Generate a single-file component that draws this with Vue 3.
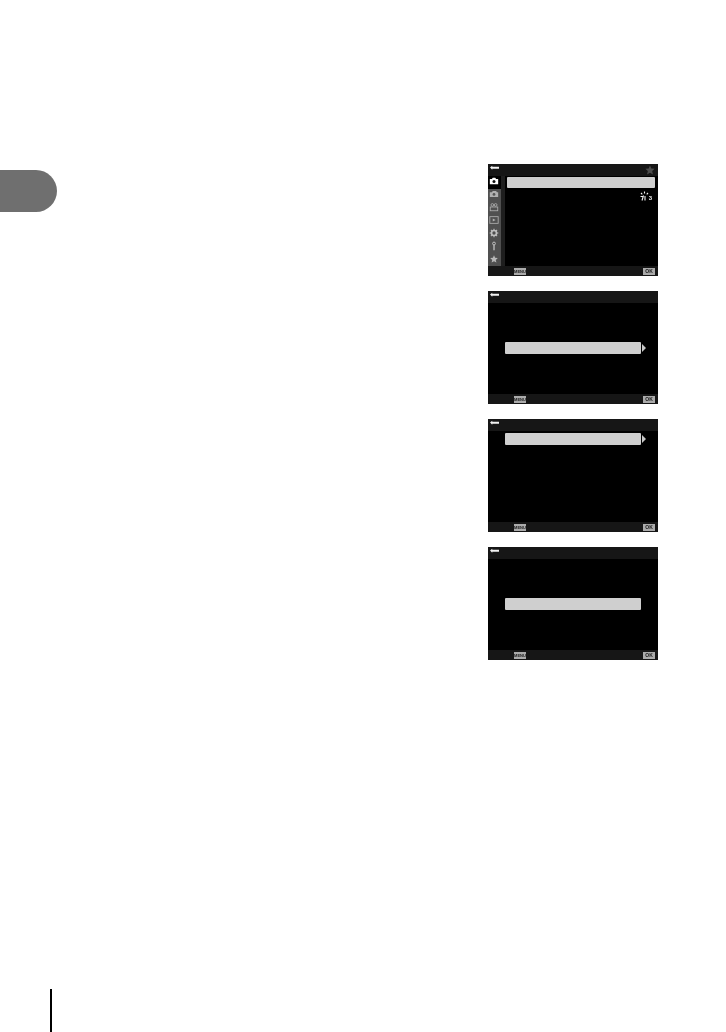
<script setup>
const screens = [
  { key: 'b', bodyClass: 'pad-mid', arrow: true },
  { key: 'c', bodyClass: 'pad-top', arrow: true },
  { key: 'd', bodyClass: 'pad-low', arrow: false },
]
</script>

<template>
  <div class="page">
    <div class="columns">
      <div class="tab"></div>
      <div class="shots">
        <div class="screen first">
          <div class="head">
            <svg class="back" viewBox="0 0 10 6"><path d="M0 2.500 2.500 .5v1.200H10v2H2.500v1.300z" fill="#f2f2f2"/></svg>
            <svg class="fav" viewBox="0 0 12 12"><path d="M6 .5l1.600 3.700 4 .4-3 2.700.9 4L6 9.200 2.500 11.300l.9-4-3-2.700 4-.4z" fill="#4c4c4c"/></svg>
          </div>
          <div class="middle">
            <div class="rail">
              <div class="rail-item on">
                <svg viewBox="0 0 12 12"><path d="M1 3.500h2.500L4.500 2h3l1 1.500H11V10H1z" fill="#fff"/><circle cx="6" cy="6.500" r="1.800" fill="#111"/></svg>
              </div>
              <div class="rail-item">
                <svg viewBox="0 0 12 12"><path d="M1 4h2.500L4.500 2.500h4L9.500 4H11v5.500H1z" fill="#b0b0b0"/><circle cx="6" cy="6.500" r="1.700" fill="#555"/></svg>
              </div>
              <div class="rail-item">
                <svg viewBox="0 0 12 12"><circle cx="4" cy="3.500" r="1.600" fill="none" stroke="#b0b0b0"/><circle cx="8" cy="3.500" r="1.600" fill="none" stroke="#b0b0b0"/><rect x="1.500" y="6" width="9" height="4.500" fill="none" stroke="#b0b0b0"/></svg>
              </div>
              <div class="rail-item">
                <svg viewBox="0 0 12 12"><rect x="1" y="2" width="10" height="8" fill="none" stroke="#b0b0b0"/><path d="M4.500 4.200 8 6 4.500 7.800z" fill="#b0b0b0"/></svg>
              </div>
              <div class="rail-item">
                <svg viewBox="0 0 12 12"><circle cx="6" cy="6" r="3" fill="none" stroke="#c0c0c0" stroke-width="2"/><path d="M6 .8v2M6 9.200v2M.8 6h2M9.200 6h2M2.300 2.300l1.400 1.400M8.300 8.300l1.400 1.400M2.300 9.700l1.400-1.400M8.300 3.700l1.400-1.400" stroke="#c0c0c0" stroke-width="1.300"/></svg>
              </div>
              <div class="rail-item">
                <svg viewBox="0 0 12 12"><circle cx="6" cy="3" r="1.700" fill="none" stroke="#c0c0c0" stroke-width="1.200"/><path d="M6 4.700V11" stroke="#c0c0c0" stroke-width="1.600"/></svg>
              </div>
              <div class="rail-item">
                <svg viewBox="0 0 12 12"><path d="M6 1.500l1.300 3.100 3.300.3-2.500 2.200.8 3.200L6 8.600 3.100 10.300l.8-3.200L1.400 4.900l3.300-.3z" fill="#b8b8b8"/></svg>
              </div>
            </div>
            <div class="rail-edge"></div>
            <div class="list">
              <div class="bar wide"></div>
              <div class="value">
                <svg viewBox="0 0 9 10"><path d="M4.500 .5v2M1 2l1.300 1.300M8 2 6.700 3.300M.5 5.500h2.500M3.500 4.500l-1.500 5M5 5v4.500" stroke="#f0f0f0" stroke-width="1.100" fill="none"/></svg>
                <span>3</span>
              </div>
            </div>
          </div>
          <div class="foot">
            <span class="key menu">MENU</span>
            <span class="key ok">OK</span>
          </div>
        </div>

        <div v-for="s in screens" :key="s.key" class="screen">
          <div class="head">
            <svg class="back" viewBox="0 0 10 6"><path d="M0 2.500 2.500 .5v1.200H10v2H2.500v1.300z" fill="#f2f2f2"/></svg>
          </div>
          <div class="body" :class="s.bodyClass">
            <div class="line">
              <div class="bar"></div>
              <svg v-if="s.arrow" class="more" viewBox="0 0 4 8"><path d="M0 0l4 4-4 4z" fill="#c8c8c8"/></svg>
            </div>
          </div>
          <div class="foot">
            <span class="key menu">MENU</span>
            <span class="key ok">OK</span>
          </div>
        </div>
      </div>
    </div>
    <div class="rule"></div>
  </div>
</template>

<style scoped>
.page {
  height: 1032px;
  width: 726px;
  display: flex;
  flex-direction: column;
  background: #fff;
  font-family: "Liberation Sans", sans-serif;
  overflow: hidden;
}
.columns {
  display: flex;
  padding-top: 164px;
}
.tab {
  width: 57px;
  height: 42px;
  margin-top: 6px;
  background: #6f6f6f;
  border-radius: 0 21px 21px 0;
}
.shots {
  margin-left: 431px;
  width: 170px;
  display: flex;
  flex-direction: column;
  gap: 15px;
}
.screen {
  height: 113px;
  background: #000;
  display: flex;
  flex-direction: column;
  filter: blur(0.4px);
}
.screen.first {
  height: 112px;
}
.head {
  height: 12px;
  background: #161616;
  display: flex;
  justify-content: space-between;
  padding: 1px 3px 0 2px;
  box-sizing: border-box;
  flex: none;
}
.back {
  width: 9px;
  height: 6px;
}
.fav {
  width: 10px;
  height: 10px;
}
.middle {
  flex: 1;
  display: flex;
  min-height: 0;
}
.rail {
  width: 13px;
  background: #505050;
  display: flex;
  flex-direction: column;
}
.rail-item {
  flex: 1;
  display: flex;
  align-items: center;
  justify-content: center;
  padding-right: 1px;
}
.rail-item svg {
  width: 10px;
  height: 10px;
  margin-bottom: 3px;
}
.rail-item.on {
  background: #000;
}
.rail-edge {
  width: 4px;
  background: #1e1e1e;
}
.list {
  flex: 1;
  padding: 1px 3px 0 2px;
}
.bar {
  height: 12px;
  width: 136px;
  background: #cfcfcf;
  border-radius: 1px;
}
.bar.wide {
  width: 100%;
  height: 11px;
}
.value {
  display: flex;
  justify-content: flex-end;
  align-items: flex-end;
  margin-top: 2px;
  padding-right: 3px;
  height: 11px;
  color: #f0f0f0;
  font-size: 6px;
  font-weight: 700;
  line-height: 6px;
}
.value svg {
  width: 9px;
  height: 10px;
}
.body {
  flex: 1;
  padding-left: 17px;
}
.pad-mid {
  padding-top: 39px;
}
.pad-top {
  padding-top: 2px;
}
.pad-low {
  padding-top: 39px;
}
.line {
  display: flex;
  align-items: center;
  gap: 1px;
}
.more {
  width: 4px;
  height: 8px;
}
.foot {
  height: 10px;
  background: #161616;
  display: flex;
  justify-content: space-between;
  align-items: center;
  padding: 0 3px 0 26px;
  flex: none;
}
.key {
  background: #ababab;
  color: #1a1a1a;
  font-size: 4px;
  font-weight: 700;
  height: 7px;
  line-height: 7px;
  width: 12px;
  text-align: center;
  white-space: nowrap;
}
.key.ok {
  font-size: 5px;
}
.rule {
  margin-top: auto;
  margin-left: 50px;
  width: 1.500px;
  height: 43px;
  background: #000;
}
</style>
